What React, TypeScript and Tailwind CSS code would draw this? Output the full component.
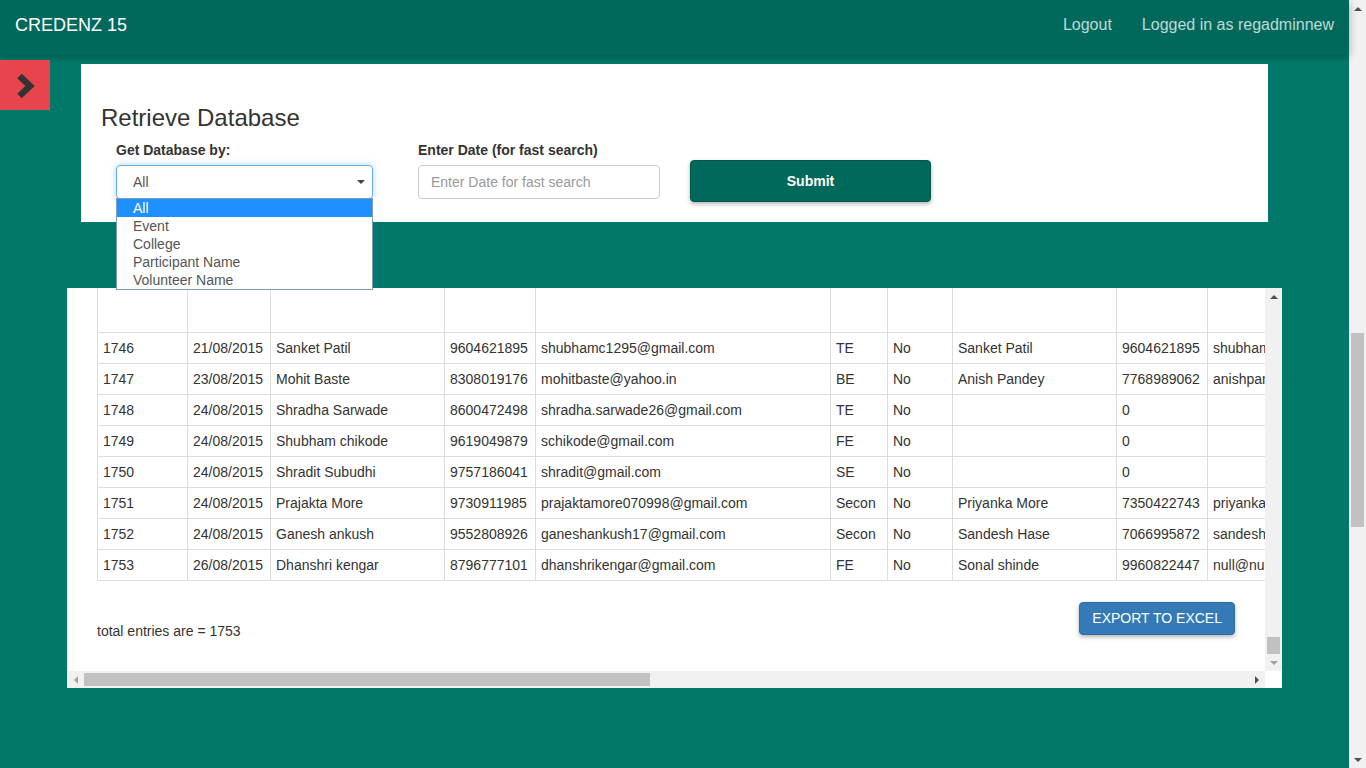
import React from "react";

type Row = string[];

const rows: Row[] = [
  ["1746", "21/08/2015", "Sanket Patil", "9604621895", "shubhamc1295@gmail.com", "TE", "No", "Sanket Patil", "9604621895", "shubhamc1295@gmail.com"],
  ["1747", "23/08/2015", "Mohit Baste", "8308019176", "mohitbaste@yahoo.in", "BE", "No", "Anish Pandey", "7768989062", "anishpandey@gmail.com"],
  ["1748", "24/08/2015", "Shradha Sarwade", "8600472498", "shradha.sarwade26@gmail.com", "TE", "No", "", "0", ""],
  ["1749", "24/08/2015", "Shubham chikode", "9619049879", "schikode@gmail.com", "FE", "No", "", "0", ""],
  ["1750", "24/08/2015", "Shradit Subudhi", "9757186041", "shradit@gmail.com", "SE", "No", "", "0", ""],
  ["1751", "24/08/2015", "Prajakta More", "9730911985", "prajaktamore070998@gmail.com", "Secon", "No", "Priyanka More", "7350422743", "priyankamore@gmail.com"],
  ["1752", "24/08/2015", "Ganesh ankush", "9552808926", "ganeshankush17@gmail.com", "Secon", "No", "Sandesh Hase", "7066995872", "sandeshhase@gmail.com"],
  ["1753", "26/08/2015", "Dhanshri kengar", "8796777101", "dhanshrikengar@gmail.com", "FE", "No", "Sonal shinde", "9960822447", "null@null.com"],
];

const colW = [90, 83, 174, 91, 295, 57, 65, 164, 91, 250];

function Tri({ dir, color }: { dir: "up" | "down" | "left" | "right"; color: string }) {
  const pts =
    dir === "up"
      ? "0,4 4,0 8,4"
      : dir === "down"
      ? "0,0 8,0 4,4"
      : dir === "left"
      ? "4,0 4,8 0,4"
      : "0,0 4,4 0,8";
  const w = dir === "up" || dir === "down" ? 8 : 4;
  const h = dir === "up" || dir === "down" ? 4 : 8;
  return (
    <svg width={w} height={h} viewBox={`0 0 ${w} ${h}`}>
      <polygon points={pts} fill={color} />
    </svg>
  );
}

export default function App() {
  const options = ["All", "Event", "College", "Participant Name", "Volunteer Name"];
  return (
    <div className="flex h-[768px] w-[1366px] overflow-hidden bg-[#00796b] font-['Liberation_Sans',Arial,sans-serif] text-[14px] text-[#333]">
      <div className="relative flex min-w-0 flex-1 flex-col">
        <header className="relative z-10 flex h-[55px] shrink-0 items-center bg-[#00695c] pb-[6px] pl-[15px] pr-[15px] shadow-[0_2px_8px_rgba(0,0,0,0.3)]">
          <span className="text-[18px] leading-[20px] text-white">CREDENZ 15</span>
          <nav className="ml-auto flex items-center gap-[30px] text-[16px] leading-[20px] text-white/75">
            <span>Logout</span>
            <span>Logged in as regadminnew</span>
          </nav>
        </header>

        <button className="absolute left-0 top-[60px] z-10 flex h-[50px] w-[50px] items-center justify-center bg-[#e8444e]">
          <svg width="50" height="50" viewBox="0 0 50 50" className="absolute left-0 top-0">
            <polyline points="19.5,16 30,26 19.5,36" fill="none" stroke="#333" strokeWidth="6.5" strokeLinejoin="miter" />
          </svg>
        </button>

        <section className="mx-[81px] mt-[9px] h-[158px] shrink-0 bg-white pl-[20px] pt-[41px]">
          <h3 className="text-[24px] leading-[26px] text-[#333]">Retrieve Database</h3>
          <div className="mt-[9px] flex items-start pl-[15px]">
            <div className="relative w-[257px]">
              <label className="block text-[14px] font-bold leading-[20px] text-[#333]">Get Database by:</label>
              <div className="mt-[5px] flex h-[34px] items-center justify-between rounded-[4px] border border-[#66afe9] pl-[16px] pr-[7px] text-[#555] shadow-[0_0_6px_rgba(102,175,233,0.5)]">
                <span>All</span>
                <Tri dir="down" color="#444" />
              </div>
              <div className="absolute left-0 top-[58px] z-20 w-[257px] border border-[#7f9db9] bg-white">
                {options.map((o, i) => (
                  <div
                    key={o}
                    className={
                      i === 0
                        ? "h-[18px] bg-[#1e90ff] pl-[16px] text-[14px] leading-[18px] text-white"
                        : "h-[18px] pl-[16px] text-[14px] leading-[18px] text-[#555]"
                    }
                  >
                    {o}
                  </div>
                ))}
              </div>
            </div>
            <div className="ml-[45px] w-[242px]">
              <label className="block text-[14px] font-bold leading-[20px] text-[#333]">Enter Date (for fast search)</label>
              <div className="mt-[5px] flex h-[34px] items-center rounded-[4px] border border-[#ccc] pl-[12px] text-[#999]">
                Enter Date for fast search
              </div>
            </div>
            <button className="ml-[30px] mt-[20px] h-[42px] w-[241px] rounded-[4px] border border-[#00574b] bg-[#00695c] text-[14px] font-bold text-white shadow-[0_2px_4px_rgba(0,0,0,0.3)]">
              Submit
            </button>
          </div>
        </section>

        <section className="mx-[67px] mt-[66px] flex h-[400px] shrink-0 flex-col bg-white">
          <div className="flex min-h-0 flex-1">
            <div className="min-w-0 flex-1 overflow-hidden px-[30px]">
              <table className="w-[1360px] table-fixed border-collapse">
                <colgroup>
                  {colW.map((w, i) => (
                    <col key={i} style={{ width: w }} />
                  ))}
                </colgroup>
                <tbody>
                  <tr>
                    {colW.map((_, i) => (
                      <td key={i} className="h-[44px] border border-t-0 border-[#ddd] p-0"></td>
                    ))}
                  </tr>
                  {rows.map((r) => (
                    <tr key={r[0]}>
                      {r.map((c, i) => (
                        <td
                          key={i}
                          className="overflow-hidden whitespace-nowrap border border-[#ddd] px-[5px] py-[5px] text-[14px] leading-[20px] text-[#333]"
                        >
                          {c}
                        </td>
                      ))}
                    </tr>
                  ))}
                </tbody>
              </table>
              <div className="mt-[21px] flex items-start justify-between">
                <span className="pt-[19px] leading-[20px]">total entries are = 1753</span>
                <button className="h-[33px] rounded-[4px] border border-[#2e6da4] bg-[#337ab7] px-[12px] text-[14px] leading-[20px] text-white shadow-[0_2px_4px_rgba(0,0,0,0.3)]">
                  EXPORT TO EXCEL
                </button>
              </div>
            </div>
            <div className="flex w-[17px] shrink-0 flex-col bg-[#f1f1f1]">
              <div className="flex h-[17px] items-center justify-center">
                <Tri dir="up" color="#505050" />
              </div>
              <div className="flex-1 px-[1px]">
                <div className="mx-auto mt-[332px] h-[17px] w-[13px] bg-[#c1c1c1]"></div>
              </div>
              <div className="flex h-[17px] items-center justify-center">
                <Tri dir="down" color="#a3a3a3" />
              </div>
            </div>
          </div>
          <div className="flex h-[17px] shrink-0">
            <div className="flex flex-1 items-center bg-[#f1f1f1]">
              <div className="flex h-[17px] w-[17px] items-center justify-center">
                <Tri dir="left" color="#a3a3a3" />
              </div>
              <div className="flex-1">
                <div className="h-[13px] w-[566px] bg-[#c1c1c1]"></div>
              </div>
              <div className="flex h-[17px] w-[17px] items-center justify-center">
                <Tri dir="right" color="#505050" />
              </div>
            </div>
            <div className="w-[17px] bg-white"></div>
          </div>
        </section>
      </div>

      <div className="flex w-[17px] shrink-0 flex-col bg-[#f1f1f1]">
        <div className="flex h-[17px] items-center justify-center">
          <Tri dir="up" color="#505050" />
        </div>
        <div className="flex-1 px-[2px]">
          <div className="mt-[316px] h-[194px] w-[13px] bg-[#c1c1c1]"></div>
        </div>
        <div className="flex h-[17px] items-center justify-center">
          <Tri dir="down" color="#505050" />
        </div>
      </div>
    </div>
  );
}
